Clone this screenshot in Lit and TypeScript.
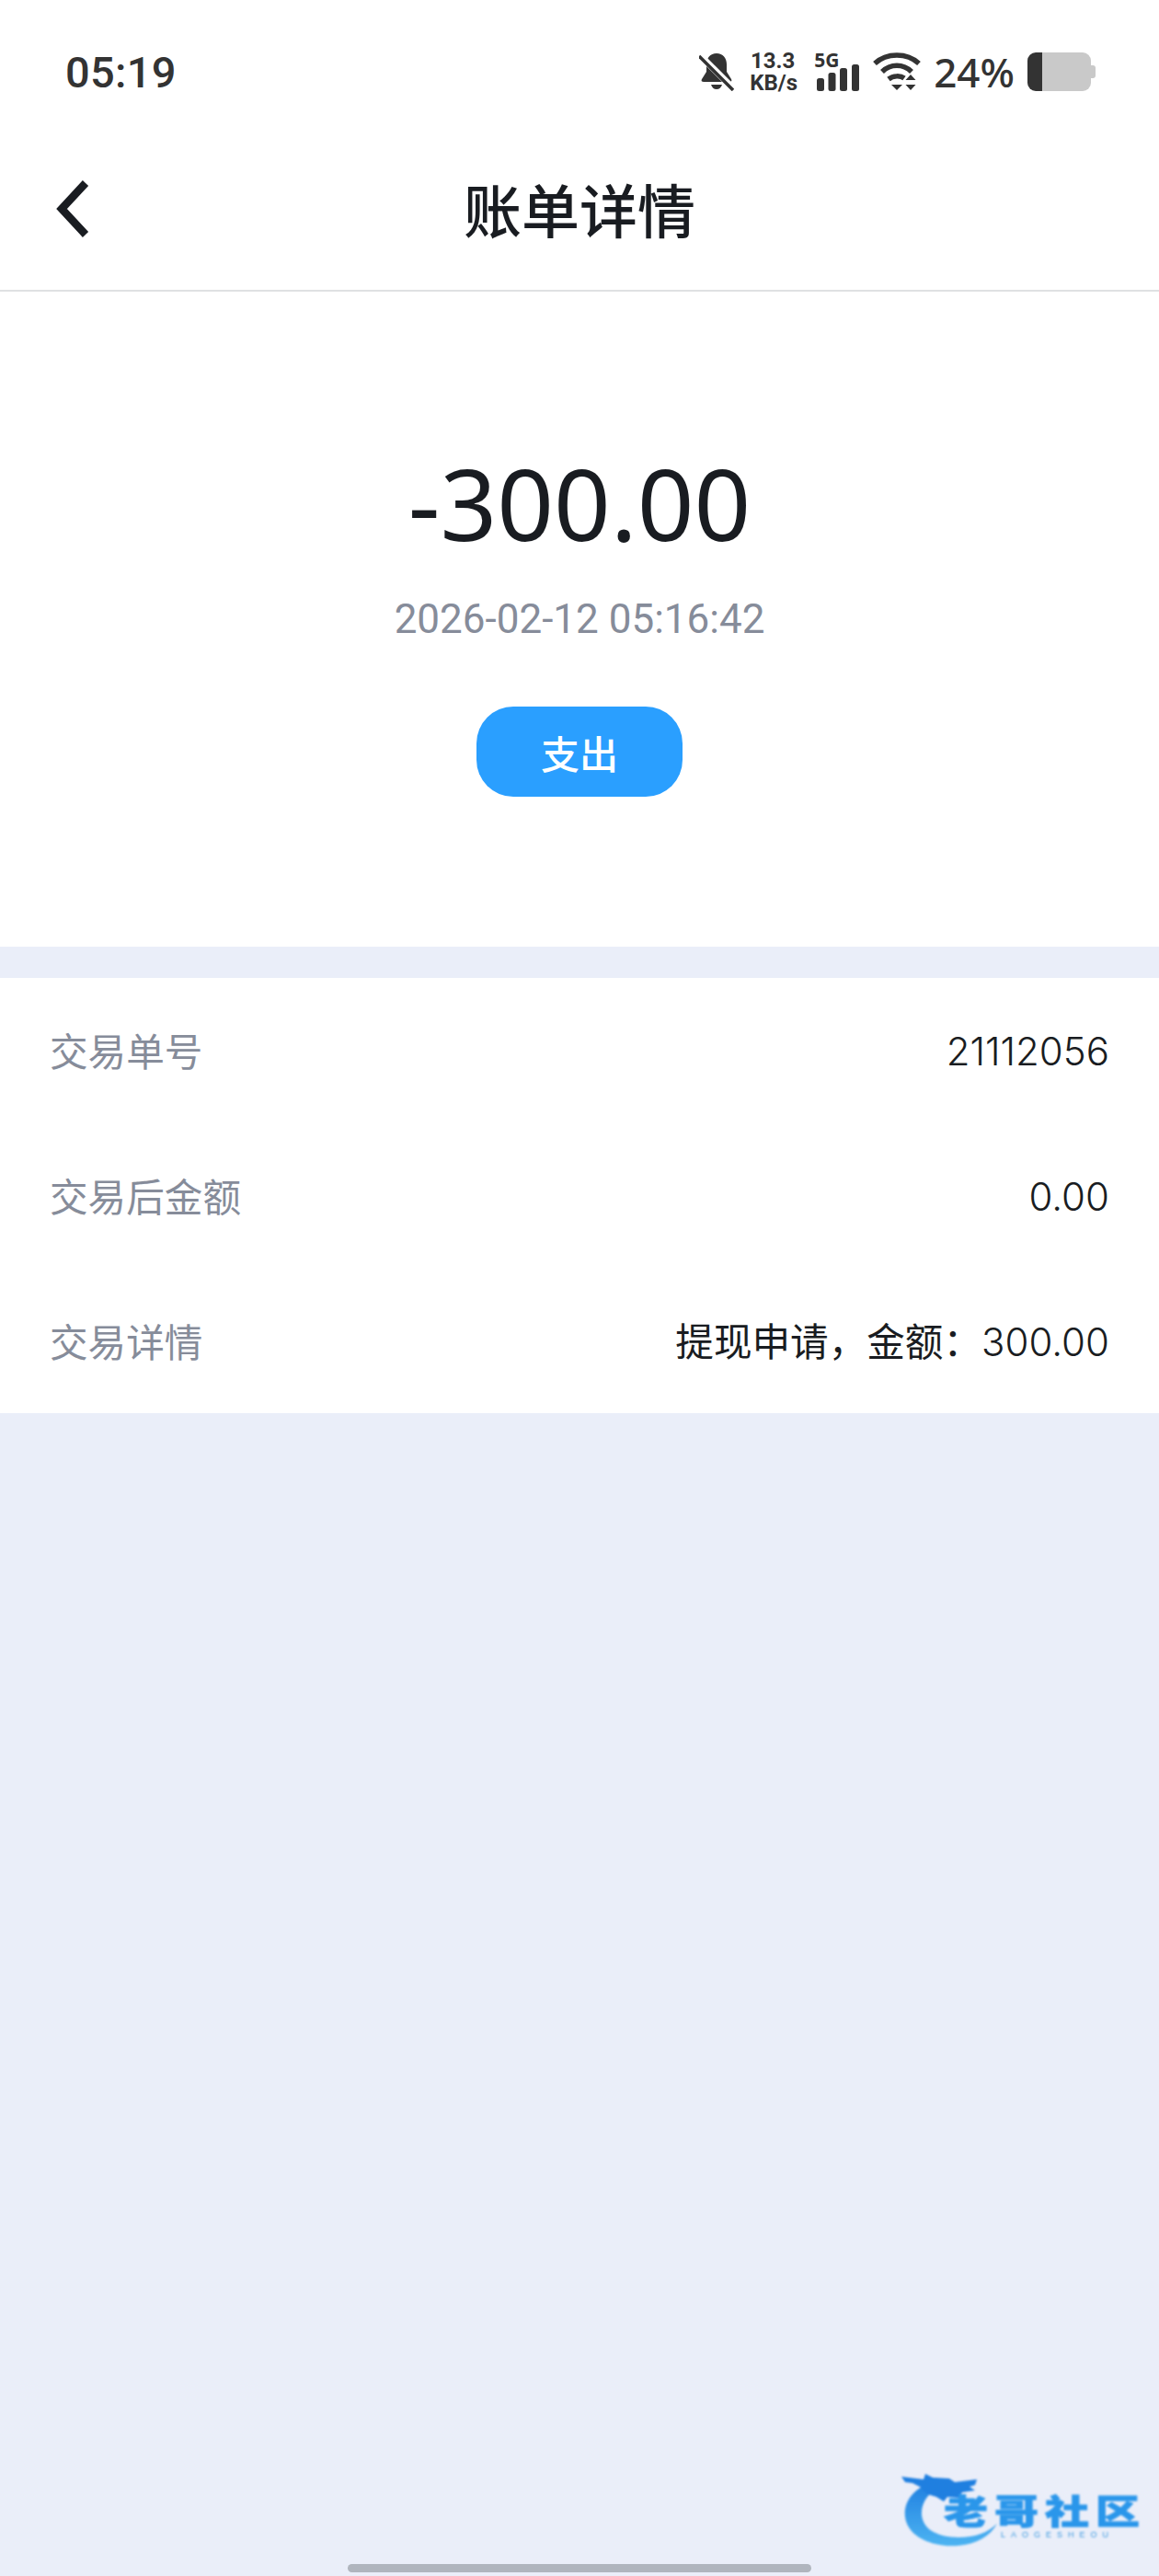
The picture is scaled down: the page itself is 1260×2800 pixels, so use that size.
import { LitElement, html, css } from "lit";
import { customElement } from "lit/decorators.js";

const rows = [
  ["交易单号", "", "21112056"],
  ["交易后金额", "", "0.00"],
  ["交易详情", "提现申请，金额：", "300.00"],
];

@customElement("app-root")
export class AppRoot extends LitElement {
  static styles = css`
    :host {
      display: block;
      position: relative;
      width: 1260px;
      height: 2800px;
      overflow: hidden;
      background: #eaeef9;
      font-family: "Noto Sans CJK SC", "Noto Sans", sans-serif;
    }
    .top { background: #fff; }
    .status {
      height: 156px;
      display: flex;
      align-items: center;
      padding: 0 69px 0 71px;
      color: #333;
    }
    .time {
      font-family: "Roboto", sans-serif;
      font-size: 47px;
      font-weight: 500;
      line-height: 1;
      letter-spacing: 0.3px;
    }
    .spacer { flex: 1; }
    .icons { display: flex; align-items: center; }
    .speed {
      font-family: "Roboto", sans-serif;
      font-weight: 700;
      font-size: 24px;
      line-height: 24px;
      text-align: center;
      margin-left: 17px;
      width: 50px;
      white-space: nowrap;
    }
    .net {
      margin-left: 20px;
      width: 50px;
      display: flex;
      flex-direction: column;
    }
    .g5 {
      font-family: "Noto Sans", sans-serif;
      font-weight: 700;
      font-size: 21px;
      line-height: 16px;
      height: 16px;
      margin-bottom: -4px;
    }
    .wifi { margin-left: 13px; }
    .pct {
      font-family: "Noto Sans", sans-serif;
      font-weight: 500;
      font-size: 44px;
      line-height: 1;
      margin: 0 14px 0 13px;
    }
    .nav {
      height: 161px;
      box-sizing: border-box;
      border-bottom: 2px solid #dfe1e3;
      display: flex;
      align-items: center;
      justify-content: center;
      padding-bottom: 20px;
      position: relative;
    }
    .back { position: absolute; left: 60px; top: 38px; }
    .title {
      font-size: 63px;
      font-weight: 500;
      line-height: 1;
      color: #191c21;
    }
    .hero {
      height: 712px;
      box-sizing: border-box;
      display: flex;
      flex-direction: column;
      align-items: center;
      padding-top: 170px;
    }
    .amount {
      font-family: "Noto Sans", sans-serif;
      font-size: 108px;
      line-height: 120px;
      color: #191c21;
    }
    .date {
      font-family: "Roboto", sans-serif;
      font-weight: 400;
      font-size: 44px;
      line-height: 60px;
      color: #868c9a;
      margin-top: 36px;
    }
    .tag {
      width: 224px;
      height: 98px;
      margin-top: 65px;
      border-radius: 40px;
      background: #2a9fff;
      color: #fff;
      font-size: 42px;
      font-weight: 500;
      display: flex;
      align-items: center;
      justify-content: center;
    }
    .list {
      margin-top: 34px;
      background: #fff;
      padding: 0 54px;
      height: 473px;
      box-sizing: border-box;
    }
    .row {
      height: 158px;
      display: flex;
      justify-content: space-between;
      align-items: center;
      font-size: 41.6px;
      line-height: 1;
    }
    .label { color: #868c9a; }
    .value { color: #191c21; }
    .num {
      font-family: "Inter", sans-serif;
      font-size: 42px;
      font-weight: 300;
    }
    .home {
      position: absolute;
      left: 378px;
      top: 2787px;
      width: 504px;
      height: 9px;
      border-radius: 5px;
      background: #b0b5be;
    }
    .logo {
      position: absolute;
      left: 960px;
      top: 2660px;
      width: 300px;
      height: 140px;
      filter: blur(1px);
    }
    .logo svg { position: absolute; left: 0; top: 0; }
    .lg {
      position: absolute;
      left: 66px;
      top: 44px;
      font-weight: 900;
      font-size: 48px;
      line-height: 48px;
      letter-spacing: 7px;
      white-space: nowrap;
      transform: scaleY(0.78);
      color: #2a96ea;
      -webkit-text-stroke: 1px #2a96ea;
    }
    .ls {
      position: absolute;
      left: 128px;
      top: 90px;
      font-family: "Liberation Sans", sans-serif;
      font-size: 9px;
      line-height: 10px;
      letter-spacing: 6px;
      color: #3c9ae0;
      white-space: nowrap;
    }
  `;

  render() {
    return html`
      <div class="top">
        <div class="status">
          <span class="time">05:19</span>
          <span class="spacer"></span>
          <div class="icons">
            <svg width="38" height="42" viewBox="0 0 38 42">
              <path fill="#333" d="M19 1c-7 0-11 5-11 12v8L3 29c-1 2 0 3 2 3h28c2 0 3-1 2-3l-5-8v-8c0-7-4-12-11-12z" />
              <path fill="#333" d="M13 35h12c-1 3-3 5-6 5s-5-2-6-5z" />
              <path stroke="#fff" stroke-width="7" d="M0 2l38 38" />
              <path stroke="#333" stroke-width="3.5" d="M0 4l37 37" />
            </svg>
            <div class="speed">13.3<br />KB/s</div>
            <div class="net">
              <span class="g5">5G</span>
              <svg width="50" height="30" viewBox="0 0 50 30">
                <rect x="3" y="16" width="8" height="14" rx="2.500" fill="#333" />
                <rect x="15.500" y="10" width="8" height="20" rx="2.500" fill="#333" />
                <rect x="28" y="5" width="8" height="25" rx="2.500" fill="#333" />
                <rect x="41" y="1" width="8" height="29" rx="2.500" fill="#333" />
              </svg>
            </div>
            <svg class="wifi" width="54" height="44" viewBox="0 0 52 44">
              <g fill="none" stroke="#333" stroke-width="5.500">
                <path d="M2 13C15 1 37 1 50 13" />
                <path d="M10 22C19 13 33 13 42 22" />
                <path d="M17 30c5-4 13-4 17-1" />
              </g>
              <path fill="#333" d="M20 36h12l-6 6z" />
              <path fill="#333" d="M41 25l5.500 6h-11zM41 42l5.500-6h-11z" />
            </svg>
            <span class="pct">24%</span>
            <svg width="74" height="42" viewBox="0 0 74 42">
              <path fill="#c9c9c9" d="M14 0h46a9 9 0 0 1 9 9v24a9 9 0 0 1-9 9H14z" />
              <path fill="#c9c9c9" d="M69 14h2a3 3 0 0 1 3 3v8a3 3 0 0 1-3 3h-2z" />
              <path fill="#333" d="M16 0H9a9 9 0 0 0-9 9v24a9 9 0 0 0 9 9h7z" />
            </svg>
          </div>
        </div>
        <div class="nav">
          <svg class="back" width="40" height="66" viewBox="0 0 40 66">
            <path d="M33 5L7 33l26 28" fill="none" stroke="#191c21" stroke-width="8.500" />
          </svg>
          <span class="title">账单详情</span>
        </div>
        <div class="hero">
          <div class="amount">-300.00</div>
          <div class="date">2026-02-12 05:16:42</div>
          <div class="tag">支出</div>
        </div>
      </div>
      <div class="list">
        ${rows.map(
          ([k, c, n]) => html`<div class="row">
            <span class="label">${k}</span>
            <span class="value">${c}<span class="num">${n}</span></span>
          </div>`
        )}
      </div>
      <div class="logo">
        <svg width="300" height="140" viewBox="0 0 300 140">
          <defs>
            <linearGradient id="sw" x1="0" y1="0" x2="0" y2="1">
              <stop offset="0" stop-color="#1f7fe0" />
              <stop offset="1" stop-color="#4db4f2" />
            </linearGradient>
          </defs>
          <path fill="url(#sw)" d="M52 38C32 46 22 60 24 76c3 22 30 33 58 31 20-2 34-10 42-24-10 10-24 15-42 15-22 0-38-8-40-24-1-14 8-26 24-34z" />
          <path fill="#1f7fe0" d="M20 32l24 3 2-6 8 4 18 1 6 4 24-3-2 6-6 2 6 4-14 2-4 6-12-1-4 5-8-5-10-3-8-8-8-4-8-1z" />
        </svg>
        <div class="lg">老哥社区</div>
        <div class="ls">LAOGESHEOU</div>
      </div>
      <div class="home"></div>
    `;
  }
}
